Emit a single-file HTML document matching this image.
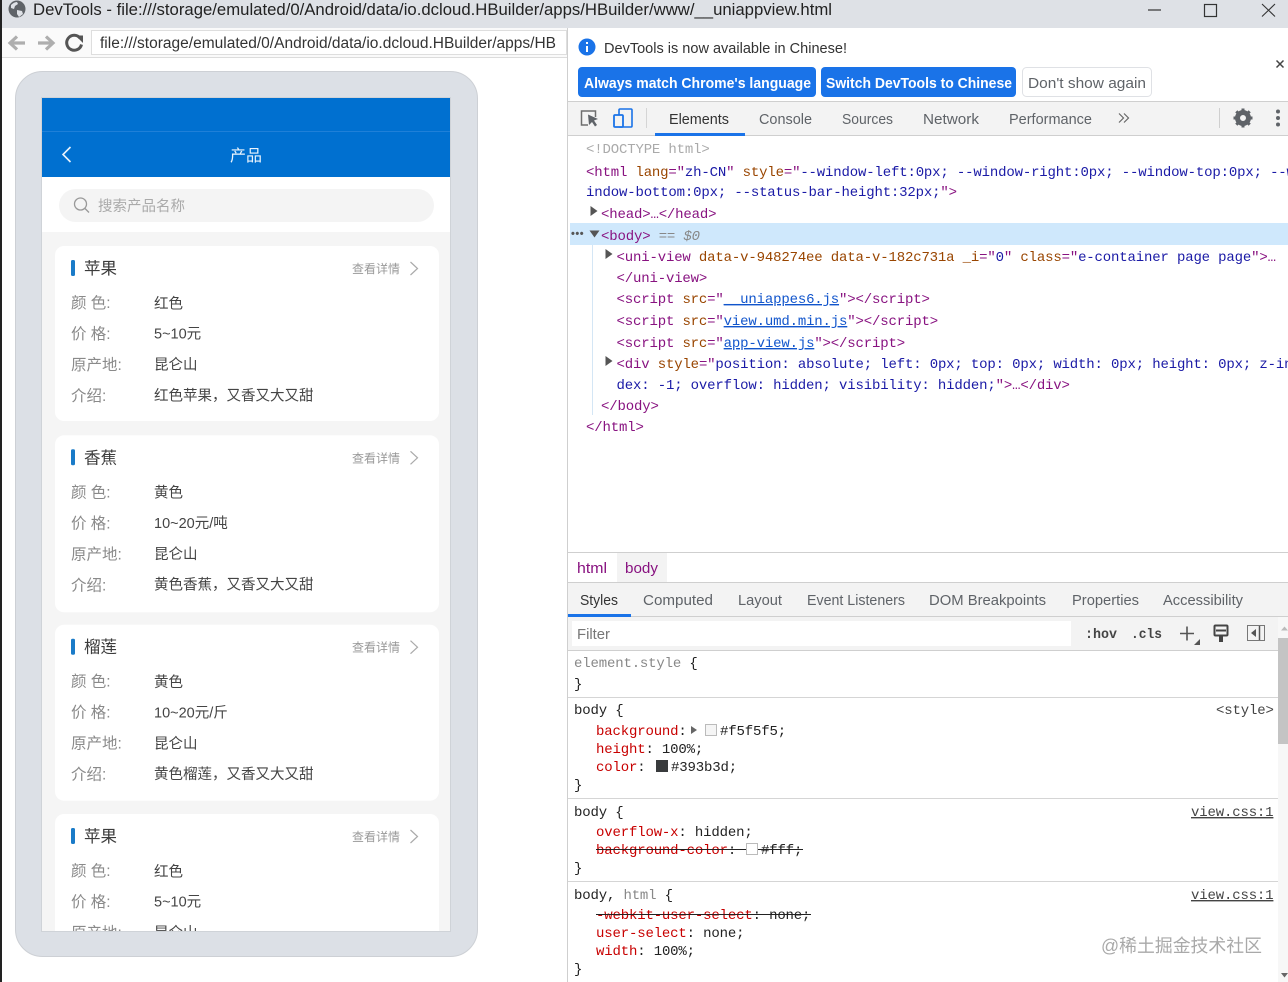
<!DOCTYPE html>
<html lang="zh-CN"><head><meta charset="utf-8"><title>DevTools</title>
<style>
html,body{margin:0;padding:0;background:#fff;width:1288px;height:982px;overflow:hidden}
svg{display:block}
text{white-space:pre}
.s{font-family:"Liberation Sans",sans-serif}
.m{font-family:"Liberation Mono",monospace;font-size:14px;letter-spacing:-.16px}
.c{font-family:"Liberation Sans","Noto Sans CJK SC",sans-serif}
.t{fill:#881280}.a{fill:#994500}.v{fill:#1a1aa6}.l{fill:#1155cc;text-decoration:underline}
.p{fill:#c80000}.k{fill:#222}.g{fill:#888}
.tab{font-size:15px;fill:#5f6368}
.lb{font-size:15.5px;fill:#8a8a8a}.vl{font-size:14.5px;fill:#444}
.ti{font-size:16.5px;fill:#3c3c3c}.mo{font-size:12px;fill:#999}
</style></head><body>
<svg width="1288" height="982" viewBox="0 0 1288 982" xmlns="http://www.w3.org/2000/svg">
<defs><clipPath id="sc"><rect x="42" y="98" width="408" height="833"/></clipPath></defs>
<rect width="1288" height="982" fill="#fff"/>

<!-- title bar -->
<rect width="1288" height="28" fill="#dee1e6"/>
<circle cx="17" cy="9" r="8.500" fill="#5f6368"/>
<path d="M11 5c2-2 4-3 6-3l1 2-3 2-1 3-3-1zM17 10l5 1 1 3-4 3-2-3z" fill="#dee1e6"/>
<text class="s" x="33" y="15" font-size="17" fill="#222" textLength="799" lengthAdjust="spacingAndGlyphs">DevTools - file:///storage/emulated/0/Android/data/io.dcloud.HBuilder/apps/HBuilder/www/__uniappview.html</text>
<path d="M1148 10h13" stroke="#333" stroke-width="1.200"/>
<rect x="1204.500" y="4.500" width="12" height="12" fill="none" stroke="#333" stroke-width="1.200"/>
<path d="M1262 4l13 12.500M1275 4l-13 12.500" stroke="#333" stroke-width="1.100"/>

<!-- nav bar -->
<rect x="0" y="28" width="567" height="29" fill="#fafafa"/>
<path d="M0 57.500h567" stroke="#dcdcdc"/>
<path d="M25 43H11M17 36.500l-7 6.500 7 6.500" fill="none" stroke="#aeaeae" stroke-width="3.200"/>
<path d="M38 43h14M46 36.500l7 6.500-7 6.500" fill="none" stroke="#aeaeae" stroke-width="3.200"/>
<path d="M80 38a7.500 7.500 0 1 0 1.500 6.500" fill="none" stroke="#555" stroke-width="3"/>
<path d="M75.500 35.500h7.500v7.500z" fill="#555"/>
<rect x="91.500" y="30.500" width="475" height="24" fill="#fff" stroke="#dedede"/>
<text class="s" x="100" y="48" font-size="15.500" fill="#333" textLength="456" lengthAdjust="spacingAndGlyphs">file:///storage/emulated/0/Android/data/io.dcloud.HBuilder/apps/HB</text>

<!-- phone -->
<rect x="15.500" y="71.500" width="462" height="885" rx="27" fill="#dce0e6" stroke="#cdd0d5"/>
<rect x="41.500" y="97.500" width="409" height="834" fill="#f5f5f5" stroke="#cfd3d8"/>
<g clip-path="url(#sc)">
<rect x="42" y="98" width="408" height="79" fill="#0070d0"/>
<path d="M42 131.500h408" stroke="#1f80d8"/>
<path d="M70.500 147l-7.500 7.500 7.500 7.500" fill="none" stroke="#e8f2fc" stroke-width="1.600"/>
<text class="c" x="230" y="161" font-size="16" fill="#eaf4fd">产品</text>
<rect x="42" y="177" width="408" height="55" fill="#fff"/>
<rect x="59" y="189" width="375" height="33" rx="16.500" fill="#f4f4f4"/>
<circle cx="80.500" cy="204" r="6" fill="none" stroke="#999" stroke-width="1.300"/>
<path d="M85 208.500l4 4" stroke="#999" stroke-width="1.300"/>
<text class="c" x="98" y="211" font-size="14.500" fill="#aaa">搜索产品名称</text>

<g>
<rect x="55" y="246" width="384" height="175" rx="9" fill="#fff"/>
<rect x="71" y="260" width="4" height="16" rx="1.500" fill="#1a7bc8"/>
<text class="c ti" x="84" y="274">苹果</text>
<text class="c mo" x="352" y="273">查看详情</text>
<path d="M410.500 262l7 6.500-7 6.500" fill="none" stroke="#aaa" stroke-width="1.200"/>
<text class="c lb" x="71" y="308">颜 色:</text><text class="c vl" x="154" y="308.400">红色</text>
<text class="c lb" x="71" y="339">价 格:</text><text class="c vl" x="154" y="338.700">5~10元</text>
<text class="c lb" x="71" y="370">原产地:</text><text class="c vl" x="154" y="369.700">昆仑山</text>
<text class="c lb" x="71" y="401">介绍:</text><text class="c vl" x="154" y="400.400">红色苹果，又香又大又甜</text>
</g>
<g transform="translate(0,189.300)">
<rect x="55" y="246" width="384" height="177" rx="9" fill="#fff"/>
<rect x="71" y="260" width="4" height="16" rx="1.500" fill="#1a7bc8"/>
<text class="c ti" x="84" y="274">香蕉</text>
<text class="c mo" x="352" y="273">查看详情</text>
<path d="M410.500 262l7 6.500-7 6.500" fill="none" stroke="#aaa" stroke-width="1.200"/>
<text class="c lb" x="71" y="308">颜 色:</text><text class="c vl" x="154" y="308.400">黄色</text>
<text class="c lb" x="71" y="339">价 格:</text><text class="c vl" x="154" y="338.700">10~20元/吨</text>
<text class="c lb" x="71" y="370">原产地:</text><text class="c vl" x="154" y="369.700">昆仑山</text>
<text class="c lb" x="71" y="401">介绍:</text><text class="c vl" x="154" y="400.400">黄色香蕉，又香又大又甜</text>
</g>
<g transform="translate(0,378.700)">
<rect x="55" y="246" width="384" height="176" rx="9" fill="#fff"/>
<rect x="71" y="260" width="4" height="16" rx="1.500" fill="#1a7bc8"/>
<text class="c ti" x="84" y="274">榴莲</text>
<text class="c mo" x="352" y="273">查看详情</text>
<path d="M410.500 262l7 6.500-7 6.500" fill="none" stroke="#aaa" stroke-width="1.200"/>
<text class="c lb" x="71" y="308">颜 色:</text><text class="c vl" x="154" y="308.400">黄色</text>
<text class="c lb" x="71" y="339">价 格:</text><text class="c vl" x="154" y="338.700">10~20元/斤</text>
<text class="c lb" x="71" y="370">原产地:</text><text class="c vl" x="154" y="369.700">昆仑山</text>
<text class="c lb" x="71" y="401">介绍:</text><text class="c vl" x="154" y="400.400">黄色榴莲，又香又大又甜</text>
</g>
<g transform="translate(0,568)">
<rect x="55" y="246" width="384" height="175" rx="9" fill="#fff"/>
<rect x="71" y="260" width="4" height="16" rx="1.500" fill="#1a7bc8"/>
<text class="c ti" x="84" y="274">苹果</text>
<text class="c mo" x="352" y="273">查看详情</text>
<path d="M410.500 262l7 6.500-7 6.500" fill="none" stroke="#aaa" stroke-width="1.200"/>
<text class="c lb" x="71" y="308">颜 色:</text><text class="c vl" x="154" y="308.400">红色</text>
<text class="c lb" x="71" y="339">价 格:</text><text class="c vl" x="154" y="338.700">5~10元</text>
<text class="c lb" x="71" y="370">原产地:</text><text class="c vl" x="154" y="369.700">昆仑山</text>
</g>
</g>

<!-- left edge -->
<rect x="0" y="0" width="2" height="982" fill="#222"/>

<!-- devtools -->
<path d="M567.500 28V982" stroke="#cfcfcf"/>
<circle cx="587" cy="47" r="8.500" fill="#1a73e8"/>
<rect x="586" y="46" width="2" height="6" fill="#fff"/><rect x="586" y="42" width="2" height="2" fill="#fff"/>
<text class="s" x="604" y="53" font-size="14.500" fill="#333" textLength="243" lengthAdjust="spacingAndGlyphs">DevTools is now available in Chinese!</text>
<rect x="578" y="67" width="238" height="30" rx="4" fill="#1a73e8"/>
<text class="s" x="584" y="88" font-size="15" font-weight="bold" fill="#fff" textLength="227" lengthAdjust="spacingAndGlyphs">Always match Chrome's language</text>
<rect x="821" y="67" width="195" height="30" rx="4" fill="#1a73e8"/>
<text class="s" x="826" y="88" font-size="15" font-weight="bold" fill="#fff" textLength="186" lengthAdjust="spacingAndGlyphs">Switch DevTools to Chinese</text>
<rect x="1022.500" y="67.500" width="129" height="29" rx="4" fill="#fff" stroke="#dfe1e5"/>
<text class="s" x="1028" y="88" font-size="15" fill="#5f6368" textLength="118" lengthAdjust="spacingAndGlyphs">Don't show again</text>
<path d="M1276.500 60.500l7 7M1283.500 60.500l-7 7" stroke="#444" stroke-width="1.500"/>

<!-- tab bar -->
<rect x="568" y="102" width="720" height="33" fill="#f3f3f3"/>
<path d="M568 101.500h720M568 135.500h720" stroke="#cfcfcf"/>
<path d="M588 125h-6.500v-14h14v6" fill="none" stroke="#6e6e6e" stroke-width="1.500"/>
<path d="M588 114.500l10 4.500-4 1.500 3 4.500-2 1.500-3-4.500-3 3z" fill="#5f6368"/>
<rect x="619" y="109" width="13" height="18" rx="1" fill="none" stroke="#1a73e8" stroke-width="1.600"/>
<rect x="614" y="115" width="9" height="12" rx="1" fill="#f3f3f3" stroke="#1a73e8" stroke-width="1.800"/>
<path d="M646.500 108v20" stroke="#d5d5d5"/>
<text class="s tab" x="669" y="124" textLength="60" lengthAdjust="spacingAndGlyphs" style="fill:#333">Elements</text>
<rect x="655" y="133" width="90" height="3" fill="#1a73e8"/>
<text class="s tab" x="759" y="124" textLength="53" lengthAdjust="spacingAndGlyphs">Console</text>
<text class="s tab" x="842" y="124" textLength="51" lengthAdjust="spacingAndGlyphs">Sources</text>
<text class="s tab" x="923" y="124" textLength="56" lengthAdjust="spacingAndGlyphs">Network</text>
<text class="s tab" x="1009" y="124" textLength="83" lengthAdjust="spacingAndGlyphs">Performance</text>
<path d="M1119 113.500l4.500 4.500-4.500 4.500M1124 113.500l4.500 4.500-4.500 4.500" fill="none" stroke="#666" stroke-width="1.200"/>
<path d="M1219.500 108v20" stroke="#cfcfcf"/>
<circle cx="1243" cy="118" r="5.500" fill="none" stroke="#5f6368" stroke-width="5"/>
<path d="M1243 108.500v3M1243 124.500v3M1233.500 118h3M1249.500 118h3M1236.300 111.300l2.200 2.200M1247.500 122.500l2.200 2.200M1249.700 111.300l-2.200 2.200M1238.500 122.500l-2.200 2.200" stroke="#5f6368" stroke-width="3"/>
<circle cx="1278" cy="111.500" r="2" fill="#5f6368"/><circle cx="1278" cy="118" r="2" fill="#5f6368"/><circle cx="1278" cy="124.500" r="2" fill="#5f6368"/>

<!-- elements -->
<rect x="570" y="223" width="718" height="22" fill="#cfe8fc"/>
<path d="M592.500 245V415" stroke="#d4e6f5"/>
<text class="m" x="586" y="153" fill="#aaa">&lt;!DOCTYPE html&gt;</text>
<text class="m" x="586" y="176"><tspan class="t">&lt;html </tspan><tspan class="a">lang</tspan><tspan class="t">="</tspan><tspan class="v">zh-CN</tspan><tspan class="t">" </tspan><tspan class="a">style</tspan><tspan class="t">="</tspan><tspan class="v">--window-left:0px; --window-right:0px; --window-top:0px; --w</tspan></text>
<text class="m" x="586" y="196"><tspan class="v">indow-bottom:0px; --status-bar-height:32px;</tspan><tspan class="t">"&gt;</tspan></text>
<path d="M590.500 206v10l7-5z" fill="#555"/>
<text class="m t" x="601" y="218">&lt;head&gt;…&lt;/head&gt;</text>
<text x="571" y="237" font-family="Liberation Sans" font-size="11" font-weight="bold" fill="#555" letter-spacing=".5">•••</text>
<path d="M589.500 230.500h10l-5 7z" fill="#555"/>
<text class="m" x="601" y="240"><tspan class="t">&lt;body&gt;</tspan><tspan fill="#888"> == </tspan><tspan fill="#888" font-style="italic">$0</tspan></text>
<path d="M605.500 249v10l7-5z" fill="#555"/>
<text class="m" x="616.500" y="261"><tspan class="t">&lt;uni-view </tspan><tspan class="a">data-v-948274ee data-v-182c731a _i</tspan><tspan class="t">="</tspan><tspan class="v">0</tspan><tspan class="t">" </tspan><tspan class="a">class</tspan><tspan class="t">="</tspan><tspan class="v">e-container page page</tspan><tspan class="t">"&gt;…</tspan></text>
<text class="m t" x="616.500" y="282">&lt;/uni-view&gt;</text>
<text class="m" x="616.500" y="303"><tspan class="t">&lt;script </tspan><tspan class="a">src</tspan><tspan class="t">="</tspan><tspan class="l">__uniappes6.js</tspan><tspan class="t">"&gt;&lt;/script&gt;</tspan></text>
<text class="m" x="616.500" y="325"><tspan class="t">&lt;script </tspan><tspan class="a">src</tspan><tspan class="t">="</tspan><tspan class="l">view.umd.min.js</tspan><tspan class="t">"&gt;&lt;/script&gt;</tspan></text>
<text class="m" x="616.500" y="347"><tspan class="t">&lt;script </tspan><tspan class="a">src</tspan><tspan class="t">="</tspan><tspan class="l">app-view.js</tspan><tspan class="t">"&gt;&lt;/script&gt;</tspan></text>
<path d="M605.500 356v10l7-5z" fill="#555"/>
<text class="m" x="616.500" y="368"><tspan class="t">&lt;div </tspan><tspan class="a">style</tspan><tspan class="t">="</tspan><tspan class="v">position: absolute; left: 0px; top: 0px; width: 0px; height: 0px; z-in</tspan></text>
<text class="m" x="616.500" y="389"><tspan class="v">dex: -1; overflow: hidden; visibility: hidden;</tspan><tspan class="t">"&gt;…&lt;/div&gt;</tspan></text>
<text class="m t" x="601" y="410">&lt;/body&gt;</text>
<text class="m t" x="586" y="431">&lt;/html&gt;</text>

<!-- breadcrumb -->
<path d="M568 552.500h720M568 582.500h720" stroke="#cfcfcf"/>
<rect x="617" y="553" width="50" height="29" fill="#f3f3f3"/>
<text class="s" x="577" y="573" font-size="15" fill="#881280" textLength="30" lengthAdjust="spacingAndGlyphs">html</text>
<text class="s" x="625" y="573" font-size="15" fill="#881280" textLength="33" lengthAdjust="spacingAndGlyphs">body</text>

<!-- styles tabs -->
<rect x="568" y="583" width="720" height="33" fill="#f3f3f3"/>
<path d="M568 616.500h720" stroke="#cfcfcf"/>
<rect x="568" y="614" width="63" height="3" fill="#1a73e8"/>
<text class="s tab" x="580" y="605" textLength="38" lengthAdjust="spacingAndGlyphs" style="fill:#333">Styles</text>
<text class="s tab" x="643" y="605" textLength="70" lengthAdjust="spacingAndGlyphs">Computed</text>
<text class="s tab" x="738" y="605" textLength="44" lengthAdjust="spacingAndGlyphs">Layout</text>
<text class="s tab" x="807" y="605" textLength="98" lengthAdjust="spacingAndGlyphs">Event Listeners</text>
<text class="s tab" x="929" y="605" textLength="117" lengthAdjust="spacingAndGlyphs">DOM Breakpoints</text>
<text class="s tab" x="1072" y="605" textLength="67" lengthAdjust="spacingAndGlyphs">Properties</text>
<text class="s tab" x="1163" y="605" textLength="80" lengthAdjust="spacingAndGlyphs">Accessibility</text>

<!-- filter bar -->
<rect x="568" y="617" width="720" height="33" fill="#f3f3f3"/>
<path d="M568 650.500h720" stroke="#cfcfcf"/>
<rect x="572" y="621" width="499" height="25" fill="#fff"/>
<text class="s" x="577" y="639" font-size="15" fill="#777" textLength="33" lengthAdjust="spacingAndGlyphs">Filter</text>
<text x="1085" y="638" font-family="Liberation Mono" font-size="14" font-weight="bold" fill="#444" textLength="32" lengthAdjust="spacingAndGlyphs">:hov</text>
<text x="1131" y="638" font-family="Liberation Mono" font-size="14" font-weight="bold" fill="#444" textLength="31" lengthAdjust="spacingAndGlyphs">.cls</text>
<path d="M1180 633.500h14M1187 626.500v14" stroke="#555" stroke-width="1.600"/>
<path d="M1200 639v6h-6z" fill="#555"/>
<rect x="1214.500" y="625.500" width="13" height="10" rx="1" fill="none" stroke="#444" stroke-width="2"/>
<path d="M1216 630.500h10" stroke="#444" stroke-width="2"/><rect x="1219" y="636" width="4" height="6" fill="#444"/>
<rect x="1247.500" y="625.500" width="17" height="15" fill="none" stroke="#777"/>
<path d="M1259.500 626v14" stroke="#555" stroke-width="1.500"/><path d="M1256 629v8l-5-4z" fill="#555"/>

<!-- scrollbar -->
<rect x="1278" y="617" width="10" height="365" fill="#f7f7f7"/>
<rect x="1278" y="638" width="10" height="106" fill="#c4c4c4"/>
<path d="M1281 630.500l3.500-4 3.500 4z" fill="#bbb"/>
<path d="M1281 973l3.500 4.500 3.500-4.500z" fill="#666"/>

<!-- styles -->
<text class="m" x="574" y="667"><tspan class="g">element.style</tspan><tspan class="k"> {</tspan></text>
<text class="m k" x="574" y="688">}</text>
<path d="M568 697.500h710" stroke="#d5d5d5"/>
<text class="m k" x="574" y="714">body {</text>
<text class="m" x="1216" y="714" fill="#444">&lt;style&gt;</text>
<text class="m" x="596" y="735"><tspan class="p">background</tspan><tspan class="k">:</tspan></text>
<path d="M691 726v8l6-4z" fill="#666"/>
<rect x="705.500" y="724.500" width="11" height="11" fill="#f5f5f5" stroke="#bbb"/>
<text class="m k" x="720" y="735">#f5f5f5;</text>
<text class="m" x="596" y="753"><tspan class="p">height</tspan><tspan class="k">: 100%;</tspan></text>
<text class="m" x="596" y="771"><tspan class="p">color</tspan><tspan class="k">:</tspan></text>
<rect x="656" y="760" width="12" height="12" fill="#393b3d"/>
<text class="m k" x="671" y="771">#393b3d;</text>
<text class="m k" x="574" y="789">}</text>
<path d="M568 798.500h710" stroke="#d5d5d5"/>
<text class="m k" x="574" y="816">body {</text>
<text class="m" x="1191" y="816" fill="#444" text-decoration="underline">view.css:1</text>
<text class="m" x="596" y="836"><tspan class="p">overflow-x</tspan><tspan class="k">: hidden;</tspan></text>
<text class="m" x="596" y="854"><tspan class="p">background-color</tspan><tspan class="k">:</tspan></text>
<rect x="746.500" y="843.500" width="11" height="11" fill="#fff" stroke="#bbb"/>
<text class="m k" x="761" y="854">#fff;</text>
<path d="M596 849.500h150M758 849.500h45" stroke="#222"/>
<text class="m k" x="574" y="872">}</text>
<path d="M568 881.500h710" stroke="#d5d5d5"/>
<text class="m" x="574" y="899"><tspan class="k">body, </tspan><tspan class="g">html</tspan><tspan class="k"> {</tspan></text>
<text class="m" x="1191" y="899" fill="#444" text-decoration="underline">view.css:1</text>
<text class="m" x="596" y="919"><tspan class="p">-webkit-user-select</tspan><tspan class="k">: none;</tspan></text>
<path d="M596 914.500h215" stroke="#222"/>
<text class="m" x="596" y="937"><tspan class="p">user-select</tspan><tspan class="k">: none;</tspan></text>
<text class="m" x="596" y="955"><tspan class="p">width</tspan><tspan class="k">: 100%;</tspan></text>
<text class="m k" x="574" y="973">}</text>

<!-- watermark -->
<text class="c" x="1101" y="952" font-size="18" fill="#8c8c8c" fill-opacity=".75" textLength="161" lengthAdjust="spacingAndGlyphs">@稀土掘金技术社区</text>
</svg>
</body></html>
